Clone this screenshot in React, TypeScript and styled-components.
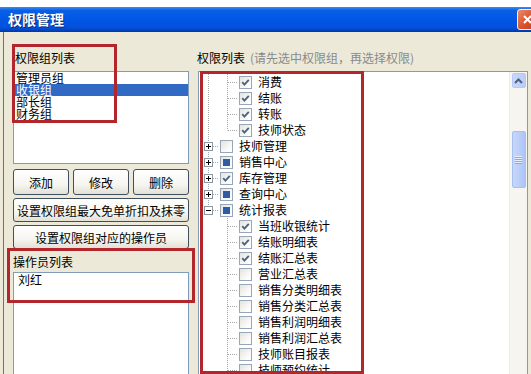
import React from 'react';
import styled, { createGlobalStyle } from 'styled-components';

type Check = 'on' | 'off' | 'part';
type Line = 'full' | 'half' | 'none';

interface Node {
  label: string;
  check: Check;
  guides: Line[];
  expander?: '+' | '-';
}

const groups = ['管理员组', '收银组', '部长组', '财务组'];

const sub = (label: string, check: Check, last = false): Node => ({
  label,
  check,
  guides: ['full', last ? 'half' : 'full'],
});
const top = (label: string, check: Check, expander: '+' | '-', last = false): Node => ({
  label,
  check,
  expander,
  guides: [last ? 'half' : 'full'],
});
const report = (label: string, check: Check): Node => ({
  label,
  check,
  guides: ['none', 'full'],
});

const tree: Node[] = [
  sub('消费', 'on'),
  sub('结账', 'on'),
  sub('转账', 'on'),
  sub('技师状态', 'on', true),
  top('技师管理', 'off', '+'),
  top('销售中心', 'part', '+'),
  top('库存管理', 'on', '+'),
  top('查询中心', 'part', '+'),
  top('统计报表', 'part', '-', true),
  report('当班收银统计', 'on'),
  report('结账明细表', 'on'),
  report('结账汇总表', 'on'),
  report('营业汇总表', 'off'),
  report('销售分类明细表', 'off'),
  report('销售分类汇总表', 'off'),
  report('销售利润明细表', 'off'),
  report('销售利润汇总表', 'off'),
  report('技师账目报表', 'off'),
  report('技师预约统计', 'off'),
];

const Guide = ({ line, connect, expander }: { line: Line; connect: boolean; expander?: '+' | '-' }) => (
  <GuideCell width="19" height="16" viewBox="0 0 19 16">
    {line !== 'none' && (
      <line x1="9.5" y1="0" x2="9.5" y2={line === 'full' ? 16 : 8.5} stroke="#a5a5a5" strokeDasharray="1 1" />
    )}
    {connect && <line x1="10" y1="8.5" x2="19" y2="8.5" stroke="#a5a5a5" strokeDasharray="1 1" />}
    {expander && (
      <>
        <rect x="5.5" y="4.5" width="8" height="8" fill="#fff" stroke="#8a99a8" />
        <line x1="7" y1="8.5" x2="12" y2="8.5" stroke="#000" />
        {expander === '+' && <line x1="9.5" y1="6" x2="9.5" y2="11" stroke="#000" />}
      </>
    )}
  </GuideCell>
);

const CheckBox = ({ state }: { state: Check }) => (
  <Box>
    {state === 'on' && (
      <svg width="11" height="11" viewBox="0 0 11 11">
        <polyline points="2.2,5.2 4.4,7.6 8.8,2.8" fill="none" stroke="#4b6483" strokeWidth="1.9" />
      </svg>
    )}
    {state === 'part' && <Partial />}
  </Box>
);

export default function App() {
  return (
    <>
      <GlobalStyle />
      <Window>
        <TitleBar>
          <Title>权限管理</Title>
          <CloseButton>
            <svg width="11" height="11" viewBox="0 0 11 11">
              <path d="M2 2 L9 9 M9 2 L2 9" stroke="#fff" strokeWidth="2" />
            </svg>
          </CloseButton>
        </TitleBar>
        <Body>
          <Panels>
            <LeftColumn>
              <Label $indent={2}>权限组列表</Label>
              <GroupList>
                {groups.map((g, i) => (
                  <ListItem key={g} $selected={i === 1}>
                    {g}
                  </ListItem>
                ))}
              </GroupList>
              <ButtonRow>
                <Button>添加</Button>
                <Button>修改</Button>
                <Button>删除</Button>
              </ButtonRow>
              <WideButton>设置权限组最大免单折扣及抹零</WideButton>
              <WideButton>设置权限组对应的操作员</WideButton>
              <OperatorLabel>操作员列表</OperatorLabel>
              <OperatorList>
                <ListItem>刘红</ListItem>
              </OperatorList>
            </LeftColumn>
            <RightColumn>
              <Label $indent={1}>
                权限列表<Hint>(请先选中权限组，再选择权限)</Hint>
              </Label>
              <TreeBox>
                <TreeContent>
                  {tree.map((n) => (
                    <TreeRow key={n.label}>
                      {n.guides.map((g, i) => (
                        <Guide
                          key={i}
                          line={g}
                          connect={i === n.guides.length - 1}
                          expander={i === n.guides.length - 1 ? n.expander : undefined}
                        />
                      ))}
                      <CheckBox state={n.check} />
                      <NodeText>{n.label}</NodeText>
                    </TreeRow>
                  ))}
                </TreeContent>
                <ScrollBar>
                  <ScrollButton>
                    <svg width="9" height="6" viewBox="0 0 9 6">
                      <polyline points="1,5 4.5,1.5 8,5" fill="none" stroke="#4d6185" strokeWidth="2" />
                    </svg>
                  </ScrollButton>
                  <Thumb>
                    <Grip />
                    <Grip />
                    <Grip />
                    <Grip />
                  </Thumb>
                </ScrollBar>
              </TreeBox>
            </RightColumn>
          </Panels>
        </Body>
        <Mark $x={12} $y={44} $w={105} $h={79} />
        <Mark $x={7} $y={248} $w={188} $h={55} />
        <Mark $x={200} $y={71} $w={164} $h={303} />
      </Window>
    </>
  );
}

const GlobalStyle = createGlobalStyle`
  html, body {
    margin: 0;
    padding: 0;
    background: #fff;
  }
  body {
    font-family: 'Noto Sans CJK SC', 'Liberation Sans', sans-serif;
    font-size: 12px;
    color: #000;
  }
`;

const Window = styled.div`
  position: relative;
  display: flex;
  flex-direction: column;
  width: 531px;
  height: 374px;
  padding-top: 7px;
  box-sizing: border-box;
  overflow: hidden;
  background: #fff;
`;

const TitleBar = styled.div`
  display: flex;
  align-items: center;
  justify-content: space-between;
  flex-shrink: 0;
  height: 25px;
  padding-left: 8px;
  background: linear-gradient(
    to bottom,
    #3b8af2 0%,
    #0a5fe6 14%,
    #0156e4 50%,
    #0150dc 84%,
    #0038a6 100%
  );
`;

const Title = styled.div`
  color: #fff;
  font-size: 14px;
  font-weight: bold;
  line-height: 25px;
  text-shadow: 1px 1px 0 #0a2a7a;
`;

const CloseButton = styled.div`
  display: flex;
  align-items: center;
  justify-content: center;
  width: 21px;
  height: 21px;
  margin-right: -7px;
  box-sizing: border-box;
  border: 1px solid #f3f3f3;
  border-radius: 3px;
  background: linear-gradient(135deg, #ea8a6a 0%, #d8512e 55%, #c23f1e 100%);
`;

const Body = styled.div`
  flex: 1;
  min-height: 0;
  padding-left: 3px;
  background: #ece9d8;
  overflow: hidden;
`;

const Panels = styled.div`
  display: flex;
  gap: 7px;
  height: 100%;
  padding: 17px 3px 0 9px;
  box-sizing: border-box;
  border-left: 1px solid #6f7270;
`;

const LeftColumn = styled.div`
  display: flex;
  flex-direction: column;
  width: 176px;
  flex-shrink: 0;
`;

const RightColumn = styled.div`
  display: flex;
  flex-direction: column;
  flex: 1;
`;

const Label = styled.div<{ $indent: number }>`
  height: 18px;
  line-height: 18px;
  margin-bottom: 4px;
  padding-left: ${(p) => p.$indent}px;
  white-space: nowrap;
`;

const Hint = styled.span`
  margin-left: 5px;
  color: #8a8a8a;
`;

const ListBox = styled.div`
  box-sizing: border-box;
  border: 1px solid #7f9db9;
  background: #fff;
`;

const GroupList = styled(ListBox)`
  height: 93px;
  flex-shrink: 0;
`;

const OperatorList = styled(ListBox)`
  height: 120px;
  flex-shrink: 0;
  padding-top: 1px;
  padding-left: 2px;
`;

const ListItem = styled.div<{ $selected?: boolean }>`
  height: 12px;
  line-height: 12px;
  padding-left: 2px;
  white-space: nowrap;
  color: ${(p) => (p.$selected ? '#fff' : '#000')};
  background: ${(p) => (p.$selected ? '#316ac5' : 'transparent')};
`;

const ButtonRow = styled.div`
  display: flex;
  gap: 4px;
  margin-top: 5px;
`;

const Button = styled.div`
  display: flex;
  align-items: center;
  justify-content: center;
  flex: 1;
  height: 26px;
  box-sizing: border-box;
  border: 1px solid #3f4f60;
  border-radius: 3px;
  background: linear-gradient(to bottom, #ffffff 0%, #f6f5f0 60%, #e3e0d6 100%);
  white-space: nowrap;
`;

const WideButton = styled(Button)`
  flex: none;
  height: 24px;
  margin-top: 3px;
`;

const OperatorLabel = styled.div`
  height: 18px;
  line-height: 18px;
  margin: 4px 0 1px;
`;

const TreeBox = styled.div`
  display: flex;
  height: 320px;
  flex-shrink: 0;
  margin-left: 2px;
  box-sizing: border-box;
  border: 1px solid #7f9db9;
  background: #fff;
`;

const TreeContent = styled.div`
  flex: 1;
  padding-top: 2px;
`;

const TreeRow = styled.div`
  display: flex;
  align-items: center;
  height: 16px;
`;

const GuideCell = styled.svg`
  display: block;
  flex-shrink: 0;
`;

const Box = styled.div`
  display: flex;
  align-items: center;
  justify-content: center;
  width: 13px;
  height: 13px;
  margin-left: 2px;
  flex-shrink: 0;
  box-sizing: border-box;
  border: 1px solid #98a7b8;
  background: linear-gradient(135deg, #e4e3dc 0%, #fbfbf9 70%, #ffffff 100%);
`;

const Partial = styled.div`
  width: 7px;
  height: 7px;
  background: #2e5ca6;
`;

const NodeText = styled.div`
  margin-left: 6px;
  line-height: 16px;
  white-space: nowrap;
`;

const ScrollBar = styled.div`
  display: flex;
  flex-direction: column;
  align-items: center;
  width: 17px;
  flex-shrink: 0;
  background: #f6f5ef;
  border-left: 1px solid #efeee6;
`;

const ScrollButton = styled.div`
  display: flex;
  align-items: center;
  justify-content: center;
  width: 14px;
  height: 15px;
  margin-top: 1px;
  box-sizing: border-box;
  border: 1px solid #b6c9f4;
  border-radius: 2px;
  background: linear-gradient(to right, #c9d8fb, #b9cdf7);
`;

const Thumb = styled.div`
  display: flex;
  flex-direction: column;
  align-items: center;
  justify-content: center;
  gap: 1px;
  width: 14px;
  height: 57px;
  margin-top: 43px;
  box-sizing: border-box;
  border: 1px solid #a9bfee;
  border-radius: 2px;
  background: linear-gradient(to right, #c6d6fb, #b8cdf9 60%, #adc3f5);
`;

const Grip = styled.div`
  width: 7px;
  height: 1px;
  background: #e9efff;
  box-shadow: 0 1px 0 #8ea7dd;
`;

const Mark = styled.div<{ $x: number; $y: number; $w: number; $h: number }>`
  position: absolute;
  left: ${(p) => p.$x}px;
  top: ${(p) => p.$y}px;
  width: ${(p) => p.$w}px;
  height: ${(p) => p.$h}px;
  box-sizing: border-box;
  border: 3px solid #b3262c;
  pointer-events: none;
`;
